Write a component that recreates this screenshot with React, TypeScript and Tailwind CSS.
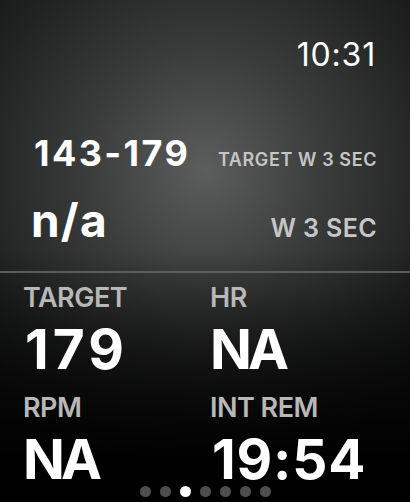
import React from "react";

export default function App() {
  return (
    <div
      className="relative w-[410px] h-[502px] overflow-hidden text-white bg-[#0b0b0b] bg-[linear-gradient(to_bottom,rgba(0,0,0,0)_0px,rgba(0,0,0,0)_250px,rgba(0,0,0,0.55)_360px,rgba(0,0,0,1)_470px),radial-gradient(ellipse_300px_300px_at_205px_170px,#5b5e5c_0%,#3a3c3b_40%,#222323_75%,#141515_100%)]"
      style={{ fontFamily: "Inter, 'Noto Sans', sans-serif" }}
    >
      {/* time */}
      <div className="flex justify-end pr-[34px] pt-[39px]">
        <span className="text-[32px] leading-none font-normal tracking-[0.8px]">10:31</span>
      </div>

      {/* target range row */}
      <div className="flex items-baseline justify-between pl-[34px] pr-[33px] mt-[64px]">
        <span className="text-[36px] leading-none font-bold tracking-[2.4px]">143-179</span>
        <span className="text-[18px] leading-none font-semibold text-[#c6c6c6] tracking-[0.6px]">
          TARGET W 3 SEC
        </span>
      </div>

      {/* n/a row */}
      <div className="flex items-baseline justify-between pl-[31px] pr-[33px] mt-[26px]">
        <span className="text-[46px] leading-none font-bold tracking-[1.2px]">n/a</span>
        <span className="text-[25px] leading-none font-semibold text-[#c6c6c6] tracking-[0.4px]">
          W 3 SEC
        </span>
      </div>

      {/* divider */}
      <div className="absolute left-0 right-0 top-[271px] h-[2px] bg-[#5c5c5c]" />

      {/* metrics grid */}
      <div className="absolute left-0 right-0 top-[284px] grid grid-cols-[187px_1fr] pl-[23px]">
        <Metric label="TARGET" value="179" valueClass="tracking-[4px] pl-[2px]" />
        <Metric label="HR" value="NA" valueClass="tracking-[-4px]" />
        <div className="col-span-2 h-[17px]" />
        <Metric label="RPM" value="NA" valueClass="tracking-[-4px]" />
        <Metric label="INT REM" value="19:54" valueClass="tracking-[0.8px] pl-[2px]" />
      </div>

      {/* page dots */}
      <div className="absolute left-0 right-0 top-[486px] flex justify-center gap-[9px]">
        {[0, 1, 2, 3, 4, 5, 6].map((i) => (
          <div
            key={i}
            className={
              i === 2
                ? "w-[11px] h-[11px] rounded-full bg-white"
                : "w-[11px] h-[11px] rounded-full bg-[#4e4e4e]"
            }
          />
        ))}
      </div>
    </div>
  );
}

function Metric({ label, value, valueClass = "" }: { label: string; value: string; valueClass?: string }) {
  return (
    <div className="flex flex-col">
      <span className="text-[27px] leading-none font-semibold text-[#b8b8b8] tracking-[-0.5px]">{label}</span>
      <span className={"text-[55px] leading-none font-bold mt-[11px] " + valueClass}>{value}</span>
    </div>
  );
}
